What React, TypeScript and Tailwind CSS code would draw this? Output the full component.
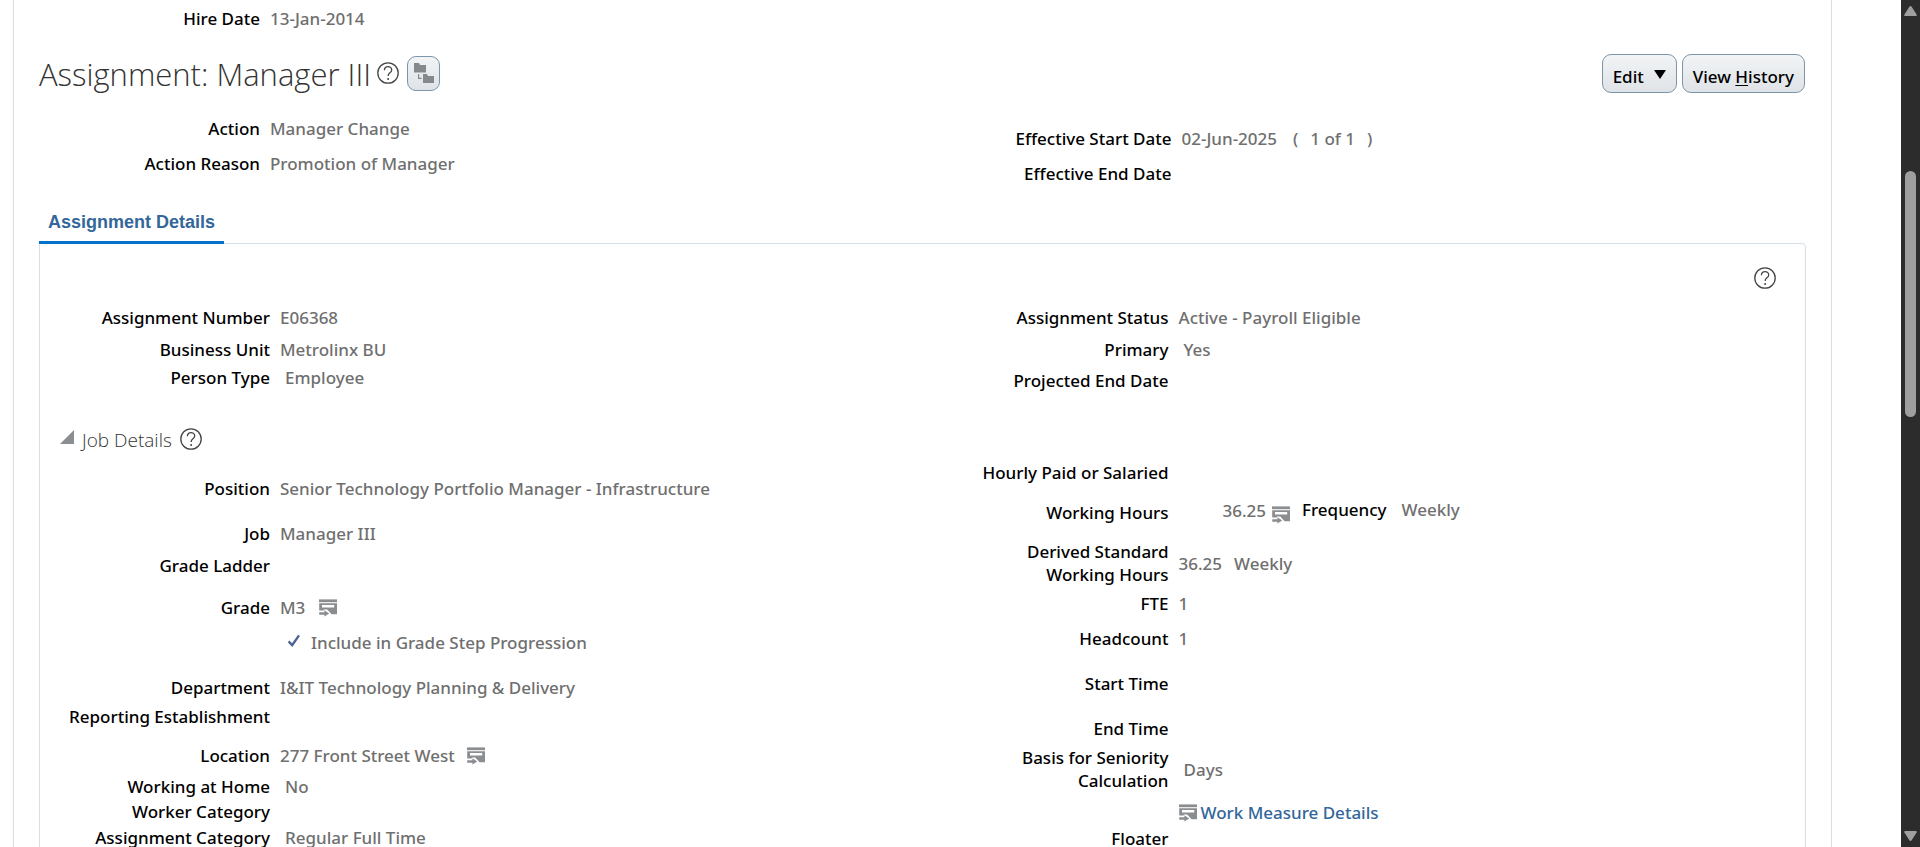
import type { ReactNode } from "react";

function HelpIcon() {
  return (
    <svg viewBox="0 0 22 22" className="block size-[22px]" fill="none" stroke="#454545" strokeWidth="1.3" aria-hidden="true">
      <circle cx="11" cy="11" r="10.2" />
      <path d="M7.4 8.2C7.4 5.9 9 4.7 11 4.7s3.7 1.2 3.7 3.2c0 3-3.6 2.9-3.6 6" />
      <circle cx="11.1" cy="17" r="1" fill="#454545" stroke="none" />
    </svg>
  );
}

function HelpButton() {
  return (
    <button type="button" aria-label="Help" className="block shrink-0">
      <HelpIcon />
    </button>
  );
}

function DrillButton({ label, className = "" }: { label: string; className?: string }) {
  return (
    <button type="button" aria-label={label} className={`block shrink-0 ${className}`}>
      <DrillIcon />
    </button>
  );
}

function DrillIcon() {
  return (
    <svg viewBox="0 0 18 18" className="block size-[18px] shrink-0" fill="#8a8e91" aria-hidden="true">
      <rect x="0" y="0.4" width="18" height="2.8" />
      <path fillRule="evenodd" d="M0.2 4.2H18V15.2H12.6L8.2 10.6H4.8V11.6H0.2ZM3 6.1V8.5H15.2V6.1Z" />
      <path d="M0.2 13.2H5.4V11.2L10.2 14.4L5.4 17.6V15.8H0.2Z" />
    </svg>
  );
}

function OrgIcon() {
  return (
    <svg viewBox="0 0 20 20" className="block size-5" fill="#85898c" aria-hidden="true">
      <path d="M0 0H5L6 2H12V9.5H0Z" />
      <path d="M9 11H13L14 13H20V20H9Z" />
      <path d="M4.6 11V15.4H7.6" fill="none" stroke="#85898c" strokeWidth="1.2" />
    </svg>
  );
}

type FieldProps = {
  label?: ReactNode;
  children?: ReactNode;
  gap?: string;
  labelWidth: string;
  indent?: string;
};

function Field({ label, children, gap = "", labelWidth, indent = "ml-2.5" }: FieldProps) {
  return (
    <div className={`flex items-center ${gap}`}>
      <dt className={`shrink-0 text-right text-black ${labelWidth}`}>{label}</dt>
      <dd className={`flex min-h-[23px] items-center text-[#6f6f6f] ${indent}`}>{children}</dd>
    </div>
  );
}

const LEFT = "w-[230px]";
const RIGHT = "w-[246px]";
const TOP_LEFT = "w-[221px]";
const TOP_RIGHT = "w-[249px]";

const pill =
  "rounded-[9px] border border-[#7c95ab] bg-linear-to-b from-[#f2f4f5] to-[#dfe3e7] text-black";

function Scrollbar() {
  return (
    <div className="flex w-[19px] shrink-0 flex-col items-center bg-[#2c2c2c] py-1.5" aria-hidden="true">
      <svg viewBox="0 0 13 10" className="h-2.5 w-[13px]" fill="#9f9f9f">
        <path d="M6.5 0Q7.2 0 7.8 0.9L12.6 8.4Q13.2 10 11.6 10H1.4Q-0.2 10 0.4 8.4L5.2 0.9Q5.8 0 6.5 0Z" />
      </svg>
      <div className="grow-[155]" />
      <div className="w-[11px] grow-[246] rounded-full bg-[#9f9f9f]" />
      <div className="grow-[414]" />
      <svg viewBox="0 0 13 10" className="h-2.5 w-[13px] rotate-180" fill="#9f9f9f">
        <path d="M6.5 0Q7.2 0 7.8 0.9L12.6 8.4Q13.2 10 11.6 10H1.4Q-0.2 10 0.4 8.4L5.2 0.9Q5.8 0 6.5 0Z" />
      </svg>
    </div>
  );
}

function Summary() {
  return (
    <dl className="grid grid-cols-2 pb-[19px]">
      <div className="pt-[23px]">
        <Field labelWidth={TOP_LEFT} label="Action">Manager Change</Field>
        <Field labelWidth={TOP_LEFT} gap="mt-3" label="Action Reason">Promotion of Manager</Field>
      </div>
      <div className="pt-[33px]">
        <Field labelWidth={TOP_RIGHT} label="Effective Start Date">
          <span>02-Jun-2025</span>
          <span className="ml-4">(</span>
          <span className="ml-3">1 of 1</span>
          <span className="ml-3">)</span>
        </Field>
        <Field labelWidth={TOP_RIGHT} gap="mt-3" label="Effective End Date" />
      </div>
    </dl>
  );
}

function AssignmentFields() {
  return (
    <dl className="grid grid-cols-2">
      <div>
        <Field labelWidth={LEFT} label="Assignment Number">E06368</Field>
        <Field labelWidth={LEFT} gap="mt-[9px]" label="Business Unit">Metrolinx BU</Field>
        <Field labelWidth={LEFT} gap="mt-[5px]" indent="ml-[15px]" label="Person Type">Employee</Field>
      </div>
      <div>
        <Field labelWidth={RIGHT} label="Assignment Status">Active - Payroll Eligible</Field>
        <Field labelWidth={RIGHT} gap="mt-[9px]" indent="ml-[15px]" label="Primary">Yes</Field>
        <Field labelWidth={RIGHT} gap="mt-2" label="Projected End Date" />
      </div>
    </dl>
  );
}

function JobFields() {
  return (
    <dl className="grid grid-cols-2">
      <div className="pt-4">
        <Field labelWidth={LEFT} label="Position">Senior Technology Portfolio Manager - Infrastructure</Field>
        <Field labelWidth={LEFT} gap="mt-[22px]" label="Job">Manager III</Field>
        <Field labelWidth={LEFT} gap="mt-[9px]" label="Grade Ladder" />
        <Field labelWidth={LEFT} gap="mt-[19px]" label="Grade">
          M3
          <DrillButton label="Grade details" className="ml-3.5" />
        </Field>
        <Field labelWidth={LEFT} gap="mt-3" indent="ml-[17px]">
          <label className="relative flex items-center">
            <input type="checkbox" checked readOnly className="sr-only" />
            <svg viewBox="0 0 14 14" className="mb-1 size-3.5" fill="none" stroke="#4d6295" aria-hidden="true">
              <path d="M1.6 7.4L5.2 11.2L12 1.4" strokeWidth="2.4" />
            </svg>
            <span className="ml-2.5">Include in Grade Step Progression</span>
          </label>
        </Field>
        <Field labelWidth={LEFT} gap="mt-[22px]" label="Department">I&amp;IT Technology Planning &amp; Delivery</Field>
        <Field labelWidth={LEFT} gap="mt-1.5" label="Reporting Establishment" />
        <Field labelWidth={LEFT} gap="mt-4" label="Location">
          277 Front Street West
          <DrillButton label="Location details" className="ml-3" />
        </Field>
        <Field labelWidth={LEFT} gap="mt-2" indent="ml-[15px]" label="Working at Home">No</Field>
        <Field labelWidth={LEFT} gap="mt-0.5" label="Worker Category" />
        <Field labelWidth={LEFT} gap="mt-[3px]" indent="ml-[15px]" label="Assignment Category">Regular Full Time</Field>
      </div>
      <div>
        <Field labelWidth={RIGHT} label="Hourly Paid or Salaried" />
        <Field labelWidth={RIGHT} gap="mt-3.5" indent="ml-[54px]" label="Working Hours">
          <span className="pb-1">36.25</span>
          <DrillButton label="Working hours details" className="mt-1 ml-1.5" />
          <span className="ml-3 pb-1.5 text-black">Frequency</span>
          <span className="ml-[15px] pb-1.5">Weekly</span>
        </Field>
        <Field labelWidth={RIGHT} gap="mt-[13px]" label={<>Derived Standard<br />Working Hours</>}>
          36.25<span className="ml-3">Weekly</span>
        </Field>
        <Field labelWidth={RIGHT} gap="mt-1.5" label="FTE">1</Field>
        <Field labelWidth={RIGHT} gap="mt-3" label="Headcount">1</Field>
        <Field labelWidth={RIGHT} gap="mt-[22px]" label="Start Time" />
        <Field labelWidth={RIGHT} gap="mt-[22px]" label="End Time" />
        <Field labelWidth={RIGHT} gap="mt-1.5" indent="ml-[15px]" label={<>Basis for Seniority<br />Calculation</>}>Days</Field>
        <Field labelWidth={RIGHT} gap="mt-[9px]">
          <a href="#work-measure" className="flex items-center gap-1 text-[#336699]">
            <DrillIcon />
            Work Measure Details
          </a>
        </Field>
        <Field labelWidth={RIGHT} gap="mt-[3px]" label="Floater" />
      </div>
    </dl>
  );
}

export default function App() {
  return (
    <div className="flex h-screen overflow-hidden bg-white font-['Noto_Sans','Open_Sans',sans-serif] text-[17px] leading-[23px] font-medium">
      <main className="mr-[69px] ml-[13px] h-full min-w-0 flex-1 overflow-hidden border-x border-[#d6dfe6] pr-[25px] pl-[25px]">
        <dl className="pt-[7px]">
          <Field labelWidth={TOP_LEFT} label="Hire Date">13-Jan-2014</Field>
        </dl>

        <header className="mt-6 flex items-start justify-between pr-px">
          <div className="flex items-center">
            <h1 className="font-['Open_Sans','Noto_Sans',sans-serif] text-[31px] leading-10 font-light text-[#333]">Assignment: Manager III</h1>
            <div className="mb-0.5 ml-1.5 flex items-center gap-2">
              <HelpButton />
              <button type="button" aria-label="Open hierarchy" className={`flex h-[35px] w-[33px] items-center justify-center ${pill}`}>
                <OrgIcon />
              </button>
            </div>
          </div>
          <div className="flex gap-[5px]">
            <button type="button" className={`flex h-[39px] items-center gap-2.5 px-2.5 pt-1.5 ${pill}`}>
              Edit
              <svg viewBox="0 0 12 9" className="mb-1 h-[9px] w-3" aria-hidden="true">
                <path d="M0 0H12L6 9Z" />
              </svg>
            </button>
            <button type="button" className={`h-[39px] px-2.5 pt-1.5 ${pill}`}>
              View <span className="underline underline-offset-2">H</span>istory
            </button>
          </div>
        </header>

        <Summary />

        <div role="tablist" className="flex font-['Liberation_Sans',Arial,sans-serif]">
          <button type="button" role="tab" aria-selected="true" className="z-10 -mb-px border-b-3 border-[#0572ce] px-[9px] py-[7px] text-[18px] font-bold text-[#336699]">
            Assignment Details
          </button>
        </div>

        <section role="tabpanel" className="rounded-tr-sm border border-[#d6dfe6] pb-10">
          <div className="flex justify-end pt-[23px] pr-[29px] pb-[17px]">
            <HelpButton />
          </div>
          <AssignmentFields />
          <div className="mt-[35px] mb-[10px] flex h-6 items-center pl-5">
            <button type="button" aria-label="Collapse Job Details" aria-expanded="true" className="mb-1">
              <svg viewBox="0 0 14 14" className="block size-3.5" fill="#8a8e91" aria-hidden="true">
                <path d="M14 0V14H0Z" />
              </svg>
            </button>
            <h2 className="ml-2 pt-0.5 font-['Open_Sans','Noto_Sans',sans-serif] text-[19px] font-light text-[#333]">Job Details</h2>
            <div className="ml-2">
              <HelpButton />
            </div>
          </div>
          <JobFields />
        </section>
      </main>
      <Scrollbar />
    </div>
  );
}
